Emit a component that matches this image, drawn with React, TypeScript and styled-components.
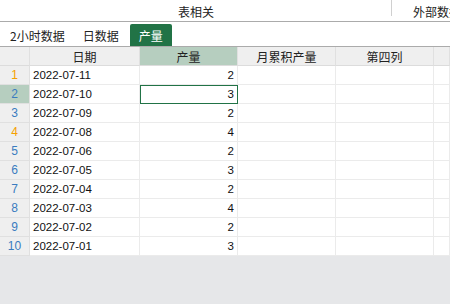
import React from "react";
import styled, { createGlobalStyle } from "styled-components";

const GlobalStyle = createGlobalStyle`
  html, body {
    margin: 0;
    padding: 0;
    background: #e6e7e9;
  }
  body {
    font-family: "Noto Sans CJK SC", "Liberation Sans", sans-serif;
    font-size: 12px;
    color: #222;
  }
`;

const rows = [
  { no: 1, date: "2022-07-11", output: 2, warn: true },
  { no: 2, date: "2022-07-10", output: 3 },
  { no: 3, date: "2022-07-09", output: 2 },
  { no: 4, date: "2022-07-08", output: 4, warn: true },
  { no: 5, date: "2022-07-06", output: 2 },
  { no: 6, date: "2022-07-05", output: 3 },
  { no: 7, date: "2022-07-04", output: 2 },
  { no: 8, date: "2022-07-03", output: 4 },
  { no: 9, date: "2022-07-02", output: 2 },
  { no: 10, date: "2022-07-01", output: 3 },
];

const selectedRow = 2;

const App = () => {
  return (
    <Page>
      <GlobalStyle />
      <GroupBar>
        <Group>表相关</Group>
        <GroupRest>外部数据</GroupRest>
      </GroupBar>
      <TabBar>
        <Tab>2小时数据</Tab>
        <Tab>日数据</Tab>
        <Tab $active>产量</Tab>
      </TabBar>
      <Grid>
        <HeadCell />
        <HeadCell>日期</HeadCell>
        <HeadCell $active>产量</HeadCell>
        <HeadCell>月累积产量</HeadCell>
        <HeadCell>第四列</HeadCell>
        <HeadCell />
        {rows.map((r) => (
          <React.Fragment key={r.no}>
            <RowNo $warn={r.warn} $active={r.no === selectedRow}>
              {r.no}
            </RowNo>
            <Cell>{r.date}</Cell>
            <Cell $num $selected={r.no === selectedRow}>
              {r.output}
            </Cell>
            <Cell />
            <Cell />
            <Cell />
          </React.Fragment>
        ))}
      </Grid>
    </Page>
  );
};

export default App;

// 组件样式
const Page = styled.div`
  width: 450px;
  height: 304px;
  overflow: hidden;
  background: #e6e7e9;
`;

const GroupBar = styled.div`
  height: 21px;
  display: flex;
  background: #fff;
  border-bottom: 1px solid #ababab;
  line-height: 1;
`;

const Group = styled.div`
  width: 392px;
  display: flex;
  justify-content: center;
  align-items: flex-end;
  padding-bottom: 3px;
  box-sizing: border-box;
  font-size: 12px;
  position: relative;
  &::after {
    content: "";
    position: absolute;
    right: 0;
    top: 0;
    height: 16px;
    border-right: 1px solid #d0d0d0;
  }
`;

const GroupRest = styled.div`
  flex: 1;
  padding-left: 21px;
  padding-bottom: 3px;
  display: flex;
  align-items: flex-end;
  white-space: nowrap;
  overflow: hidden;
`;

const TabBar = styled.div`
  height: 24px;
  display: flex;
  align-items: flex-end;
  background: #fff;
  border-bottom: 1px solid #ababab;
  padding-left: 1px;
`;

const Tab = styled.div<{ $active?: boolean }>`
  height: 22px;
  padding: 0 9px;
  margin-left: ${(p) => (p.$active ? "2px" : "0")};
  display: flex;
  align-items: center;
  justify-content: center;
  font-size: 12px;
  border-radius: 2px 2px 0 0;
  background: ${(p) => (p.$active ? "#217346" : "transparent")};
  color: ${(p) => (p.$active ? "#fff" : "#222")};
`;

const Grid = styled.div`
  display: grid;
  grid-template-columns: 30px 110px 98px 98px 98px 1fr;
  grid-auto-rows: 19px;
  background: #fff;
`;

const HeadCell = styled.div<{ $active?: boolean }>`
  box-sizing: border-box;
  display: flex;
  align-items: center;
  justify-content: center;
  background: ${(p) => (p.$active ? "#b6cebf" : "#efefef")};
  border-right: 1px solid #e0e0e0;
  border-bottom: 1px solid #dcdcdc;
  font-size: 12px;
  color: #222;
`;

const RowNo = styled.div<{ $warn?: boolean; $active?: boolean }>`
  box-sizing: border-box;
  display: flex;
  align-items: center;
  justify-content: center;
  background: ${(p) => (p.$active ? "#b6cebf" : "#efefef")};
  border-right: 1px solid #e0e0e0;
  border-bottom: 1px solid #e0e0e0;
  color: ${(p) => (p.$warn ? "#f5a000" : "#3a7cbf")};
  font-family: "Liberation Sans", sans-serif;
  font-size: 12px;
`;

const Cell = styled.div<{ $num?: boolean; $selected?: boolean }>`
  box-sizing: border-box;
  display: flex;
  align-items: center;
  justify-content: ${(p) => (p.$num ? "flex-end" : "flex-start")};
  padding: 0 3px;
  border-right: 1px solid #ebebeb;
  border-bottom: 1px solid #ebebeb;
  font-family: "Liberation Sans", sans-serif;
  font-size: 11.5px;
  color: #111;
  ${(p) => (p.$selected ? "outline: 1px solid #217346; outline-offset: -1px;" : "")}
`;
